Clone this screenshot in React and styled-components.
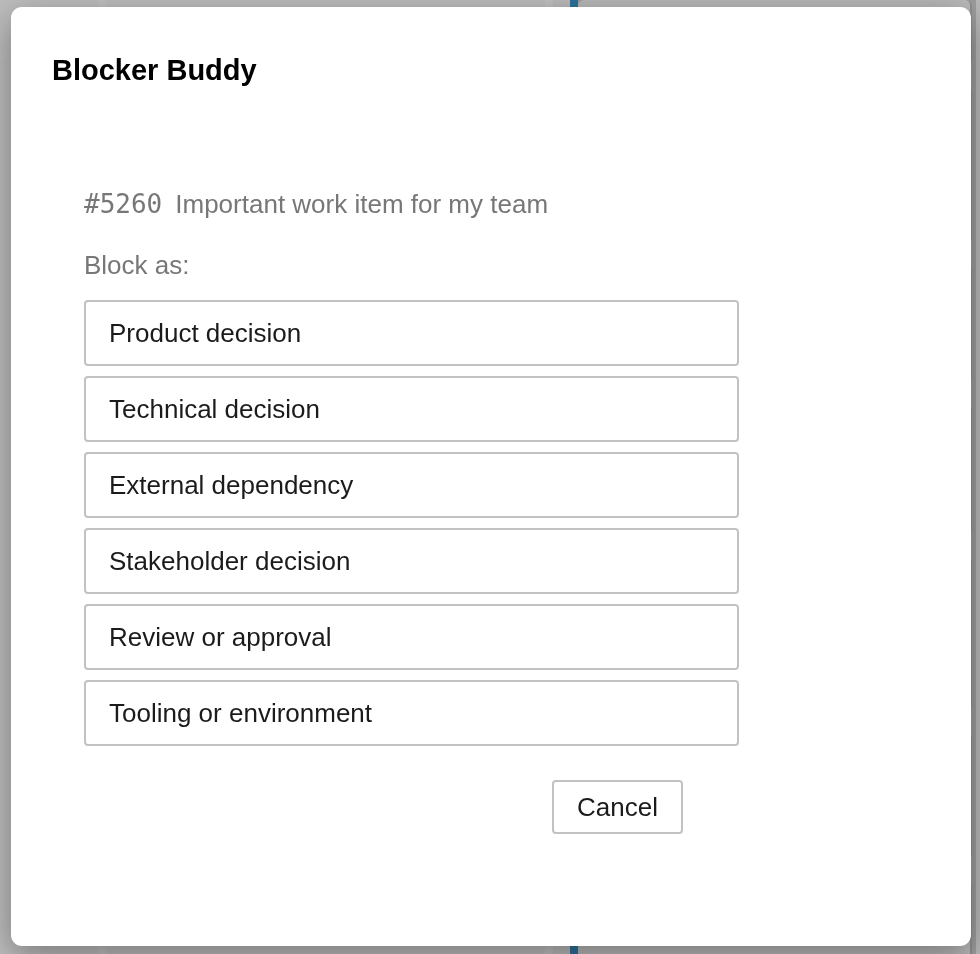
import React from "react";
import styled, { createGlobalStyle } from "styled-components";

const GlobalStyle = createGlobalStyle`
  html, body { margin: 0; padding: 0; }
  body {
    font-family: "Liberation Sans", Arial, Helvetica, sans-serif;
    background: #ffffff;
    overflow: hidden;
  }
  * { box-sizing: border-box; }
`;

/* ---------- board behind the dialog ---------- */
const Board = styled.div`
  display: flex;
  height: 954px;
  width: 980px;
  background: #f2f2f2;
  overflow: hidden;
`;

const Lane = styled.div`
  flex: 0 0 ${(p) => p.$w}px;
  background: ${(p) => p.$bg};
`;

const CardLane = styled.div`
  flex: 0 0 ${(p) => p.$w}px;
  display: flex;
  flex-direction: column;
  gap: 21px;
  padding-right: 4px;
  background: #cfcfcf;
`;

const BgCard = styled.div`
  flex: 0 0 ${(p) => p.$h}px;
  background: #f4f4f4;
  border-right: 2px solid #bdbdbd;
  border-radius: 6px;
`;

/* ---------- dialog ---------- */
const Overlay = styled.div`
  position: fixed;
  inset: 0;
  background: rgba(0, 0, 0, 0.24);
  display: flex;
  padding: 7px 4px 8px 11px;
`;

const Dialog = styled.div`
  flex: 0 0 960px;
  background: #ffffff;
  border-radius: 11px;
  box-shadow: 0 10px 36px rgba(0, 0, 0, 0.38);
  padding: 45px 41px 0 41px;
  display: flex;
  flex-direction: column;
`;

const Title = styled.h1`
  margin: 0;
  font-size: 29px;
  line-height: 36px;
  font-weight: 700;
  color: #000000;
`;

const Body = styled.div`
  margin: 100px 0 0 32px;
  width: 655px;
  display: flex;
  flex-direction: column;
`;

const Meta = styled.div`
  font-size: 26px;
  line-height: 32px;
  color: #777777;
  margin-bottom: ${(p) => p.$gap}px;
`;

const Code = styled.span`
  font-family: "DejaVu Sans Mono", "Liberation Mono", monospace;
  font-size: 26px;
  margin-right: 13px;
`;

const Options = styled.div`
  display: flex;
  flex-direction: column;
  gap: 10px;
`;

const Option = styled.button`
  height: 66px;
  display: flex;
  align-items: center;
  padding: 0 23px;
  background: #ffffff;
  border: 2px solid #c2c2c2;
  border-radius: 4px;
  font-family: inherit;
  font-size: 26px;
  color: #1b1b1b;
  text-align: left;
  cursor: pointer;
`;

const Footer = styled.div`
  display: flex;
  justify-content: flex-end;
  padding-right: 56px;
  margin-top: 34px;
`;

const Cancel = styled.button`
  height: 54px;
  width: 131px;
  background: #ffffff;
  border: 2px solid #c2c2c2;
  border-radius: 4px;
  font-family: inherit;
  font-size: 26px;
  color: #1b1b1b;
  cursor: pointer;
`;

const options = [
  "Product decision",
  "Technical decision",
  "External dependency",
  "Stakeholder decision",
  "Review or approval",
  "Tooling or environment",
];

const cards = [65, 158, 118, 130, 156, 129, 90];

export default function App() {
  return (
    <>
      <GlobalStyle />
      <Board>
        <Lane $w={98} $bg="#f9f9f9" />
        <Lane $w={8} $bg="#ffffff" />
        <Lane $w={439} $bg="#f9f9f9" />
        <Lane $w={8} $bg="#ffffff" />
        <Lane $w={17} $bg="#f7f7f7" />
        <Lane $w={8} $bg="#3d96cc" />
        <CardLane $w={398}>
          {cards.map((h, i) => (
            <BgCard key={i} $h={h} />
          ))}
        </CardLane>
      </Board>
      <Overlay>
        <Dialog role="dialog" aria-label="Blocker Buddy">
          <Title>Blocker Buddy</Title>
          <Body>
            <Meta $gap={29}>
              <Code>#5260</Code>Important work item for my team
            </Meta>
            <Meta $gap={19}>Block as:</Meta>
            <Options>
              {options.map((o) => (
                <Option key={o}>{o}</Option>
              ))}
            </Options>
            <Footer>
              <Cancel>Cancel</Cancel>
            </Footer>
          </Body>
        </Dialog>
      </Overlay>
    </>
  );
}
